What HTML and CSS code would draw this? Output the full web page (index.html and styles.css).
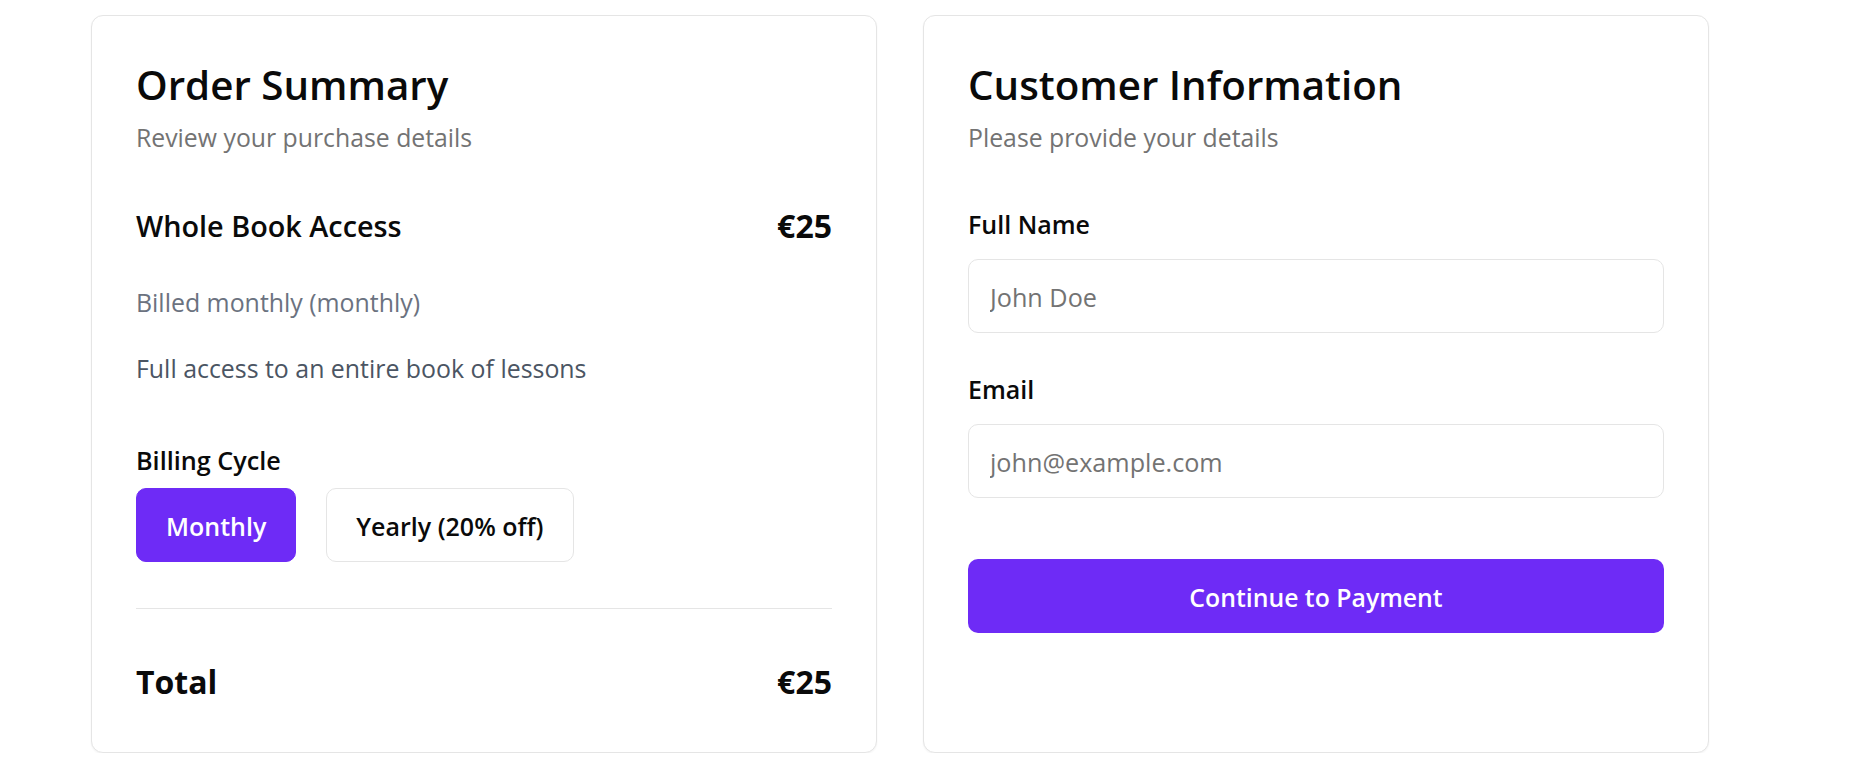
FILE: index.html
```html
<!DOCTYPE html>
<html lang="en">
<head>
<meta charset="utf-8">
<title>Checkout</title>
<link rel="stylesheet" href="styles.css">
</head>
<body>
<main class="checkout">
  <section class="card">
    <h2 class="card-title">Order Summary</h2>
    <p class="card-subtitle">Review your purchase details</p>
    <div class="item-row">
      <h3 class="item-name">Whole Book Access</h3>
      <span class="item-price">€25</span>
    </div>
    <p class="item-billing">Billed monthly (monthly)</p>
    <p class="item-desc">Full access to an entire book of lessons</p>
    <div class="cycle">
      <span class="cycle-label">Billing Cycle</span>
      <div class="cycle-options">
        <button class="cycle-btn is-active" type="button">Monthly</button>
        <button class="cycle-btn" type="button">Yearly (20% off)</button>
      </div>
    </div>
    <hr class="divider">
    <div class="total-row">
      <span>Total</span>
      <span>€25</span>
    </div>
  </section>
  <section class="card">
    <h2 class="card-title">Customer Information</h2>
    <p class="card-subtitle">Please provide your details</p>
    <form class="form">
      <div class="field">
        <label class="field-label" for="name">Full Name</label>
        <input class="input" id="name" type="text" placeholder="John Doe">
      </div>
      <div class="field">
        <label class="field-label" for="email">Email</label>
        <input class="input" id="email" type="email" placeholder="john@example.com">
      </div>
      <button class="submit" type="button">Continue to Payment</button>
    </form>
  </section>
</main>
</body>
</html>
```

FILE: styles.css
```css
* {
  box-sizing: border-box;
}

html, body {
  margin: 0;
  background: #ffffff;
}

body {
  font-family: "Open Sans", "Noto Sans", sans-serif;
  color: #0a0a0a;
}

.checkout {
  display: grid;
  grid-template-columns: 786px 786px;
  column-gap: 46px;
  padding: 15px 0 0 91px;
}

.card {
  background: #ffffff;
  border: 1px solid #e5e5e5;
  border-radius: 12px;
  padding: 44px 44px 46px;
  box-shadow: 0 1px 2px rgba(0, 0, 0, 0.05);
}

.card-title {
  margin: 0;
  font-size: 40.3px;
  line-height: 50px;
  font-weight: 600;
}

.card-subtitle {
  margin: 9px 0 0;
  font-size: 24.8px;
  line-height: 36px;
  color: #737373;
}

.item-row {
  margin-top: 49px;
  height: 44px;
  display: flex;
  align-items: center;
  justify-content: space-between;
}

.item-name {
  margin: 0;
  font-size: 28.8px;
  line-height: 44px;
  font-weight: 600;
}

.item-price {
  font-size: 32px;
  line-height: 44px;
  font-weight: 700;
}

.item-billing {
  margin: 36px 0 0;
  font-size: 24.9px;
  line-height: 36px;
  color: #6b7280;
}

.item-desc {
  margin: 30px 0 0;
  font-size: 24.9px;
  line-height: 36px;
  color: #4b5563;
}

.cycle {
  margin-top: 56px;
}

.cycle-label {
  display: block;
  font-size: 25.2px;
  line-height: 36px;
  font-weight: 600;
}

.cycle-options {
  margin-top: 10px;
  display: flex;
  gap: 30px;
}

.cycle-btn {
  height: 74px;
  padding: 2px 29px 0;
  border: 1px solid #e5e5e5;
  border-radius: 10px;
  background: #ffffff;
  color: #0a0a0a;
  font-family: inherit;
  font-size: 25px;
  font-weight: 600;
  cursor: pointer;
}

.cycle-btn.is-active {
  background: #6e2bf6;
  border-color: #6e2bf6;
  color: #ffffff;
}

.divider {
  margin: 46px 0 0;
  height: 0;
  border: 0;
  border-top: 1px solid #e5e5e5;
}

.total-row {
  margin-top: 49px;
  display: flex;
  justify-content: space-between;
  font-size: 32px;
  line-height: 48px;
  font-weight: 700;
}

.form {
  margin-top: 51px;
}

.field + .field {
  margin-top: 38px;
}

.field-label {
  display: block;
  margin-bottom: 17px;
  font-size: 25px;
  line-height: 36px;
  font-weight: 600;
}

.input {
  display: block;
  width: 100%;
  height: 74px;
  padding: 2px 21px 0;
  border: 1px solid #e5e5e5;
  border-radius: 10px;
  background: #ffffff;
  font-family: inherit;
  font-size: 25.2px;
  color: #0a0a0a;
  outline: none;
}

.input::placeholder {
  color: #737373;
}

.submit {
  display: block;
  width: 100%;
  height: 74px;
  margin-top: 61px;
  padding: 2px 0 0;
  border: 0;
  border-radius: 10px;
  background: #6e2bf6;
  color: #ffffff;
  font-family: inherit;
  font-size: 24.8px;
  font-weight: 600;
  cursor: pointer;
}
```
